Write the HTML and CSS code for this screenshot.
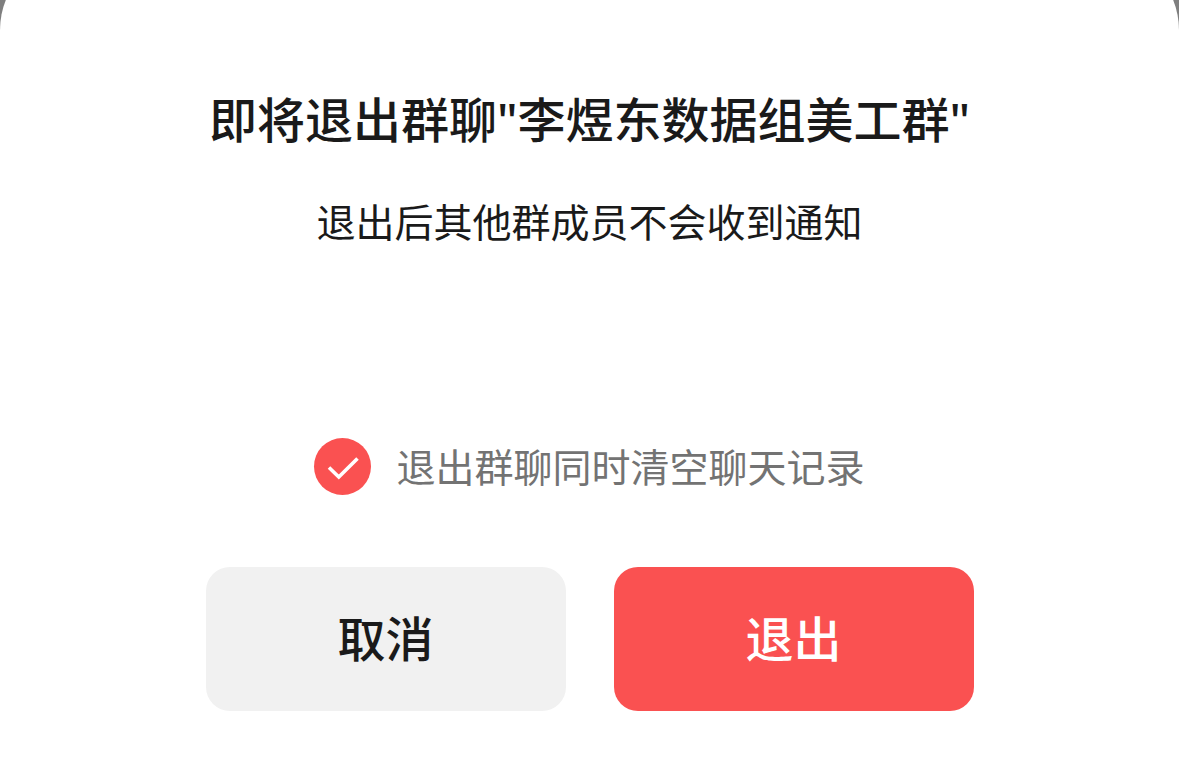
FILE: index.html
```html
<!DOCTYPE html>
<html lang="zh-CN">
<head>
    <meta charset="UTF-8">
    <meta name="viewport" content="width=device-width, initial-scale=1.0">
    <title>退出群聊</title>
    <link rel="stylesheet" href="styles.css">
</head>
<body>
    <!-- Bottom sheet -->
    <form class="sheet" role="dialog" aria-labelledby="sheetTitle">
        <h1 class="sheet-title" id="sheetTitle">即将退出群聊"李煜东数据组美工群"</h1>
        <p class="sheet-desc">退出后其他群成员不会收到通知</p>

        <div class="clear-option">
            <span class="check">
                <input type="checkbox" class="check-input" id="clearHistory" checked>
                <svg class="check-mark" viewBox="0 0 57 57" aria-hidden="true">
                    <path d="M15 29.5 L24.8 39 L43.5 20.5" fill="none" stroke="#fff" stroke-width="3.6"/>
                </svg>
            </span>
            <label class="clear-label" for="clearHistory">退出群聊同时清空聊天记录</label>
        </div>

        <!-- Actions -->
        <div class="actions">
            <button type="button" class="button cancel">取消</button>
            <button type="button" class="button leave">退出</button>
        </div>
    </form>
</body>
</html>
```
FILE: styles.css
```css
* {margin: 0; padding: 0; box-sizing: border-box;}
body {font-family: "Noto Sans", "Noto Sans CJK SC", sans-serif; background-color: #7f7f7f; color: #1a1a1a; overflow: hidden;}

/* The rounded top of the sheet runs past the top of the window */
.sheet {
    display: flex;
    flex-direction: column;
    align-items: center;
    min-height: calc(100vh + 50px);
    margin-top: -50px;
    padding: 134px 24px 67px;
    background-color: #fff;
    border-radius: 80px 80px 0 0;
}
.sheet-title {font-size: 48px; line-height: 72px; font-weight: 500; text-align: center;}
.sheet-desc {margin-top: 38px; font-size: 39px; line-height: 56px; text-align: center;}

/* Clear history option */
.clear-option {display: flex; align-items: center; gap: 25px; margin-top: 188px;}
.check {position: relative; width: 57px; height: 57px;}
.check-input {
    display: block;
    width: 57px;
    height: 57px;
    appearance: none;
    border: 2px solid #ccc;
    border-radius: 50%;
    cursor: pointer;
}
.check-input:checked {border: none; background-color: #fa5151;}
.check-mark {position: absolute; top: 0; left: 0; width: 57px; height: 57px; pointer-events: none; visibility: hidden;}
.check-input:checked + .check-mark {visibility: visible;}
.clear-label {font-size: 39px; line-height: 56px; color: #737373; cursor: pointer;}

/* Buttons */
.actions {display: flex; justify-content: center; gap: 48px; width: 100%; max-width: 768px; margin-top: 72px;}
.button {
    flex: 1;
    height: 144px;
    border: none;
    border-radius: 24px;
    font-family: inherit;
    font-size: 48px;
    line-height: 72px;
    font-weight: 500;
    cursor: pointer;
}
.cancel {background-color: #f1f1f1; color: #1a1a1a;}
.leave {background-color: #fa5151; color: #fff;}
```
